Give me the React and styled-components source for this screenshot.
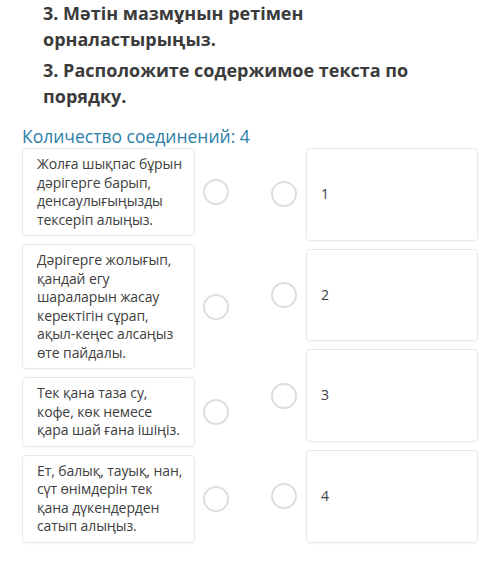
import React from "react";
import styled, { createGlobalStyle } from "styled-components";

const GlobalStyle = createGlobalStyle`
  body {
    margin: 0;
    background: #ffffff;
    font-family: "Open Sans", "Noto Sans", sans-serif;
    color: #3a3a3a;
  }
`;

const Page = styled.div`
  width: 500px;
  height: 587px;
  padding: 0 22px;
  box-sizing: border-box;
  overflow: hidden;
`;

const Question = styled.p`
  margin: 0 0 5px;
  padding-left: 21px;
  font-size: 18px;
  font-weight: 700;
  line-height: 26px;
  color: #3b3b3b;
`;

const Count = styled.div`
  margin-top: 15px;
  font-size: 17.5px;
  line-height: 24px;
  color: #2a7ea8;
`;

const Board = styled.div`
  display: flex;
  justify-content: space-between;
`;

const Column = styled.div`
  width: 207px;
  display: flex;
  flex-direction: column;
  gap: 8px;
`;

const Row = styled.div`
  display: flex;
  align-items: center;
  gap: ${(p) => p.$gap}px;
  flex: ${(p) => (p.$fill ? 1 : "none")};
`;

const Card = styled.div`
  box-sizing: border-box;
  width: 173px;
  align-self: stretch;
  display: flex;
  flex-direction: column;
  justify-content: center;
  padding: 6px 6px 6px 14px;
  border: 1px solid #e9e9e9;
  border-radius: 4px;
  box-shadow: 0 1px 2px rgba(0, 0, 0, 0.04);
  font-size: 14px;
  letter-spacing: -0.1px;
  line-height: 18.5px;
  color: #404040;
  white-space: nowrap;
`;

const Radio = styled.span`
  flex: none;
  width: 26px;
  height: 26px;
  box-sizing: border-box;
  border: 2.5px solid #dedede;
  border-radius: 50%;
`;

const left = [
  ["Жолға шықпас бұрын", "дәрігерге барып,", "денсаулығыңызды", "тексеріп алыңыз."],
  [
    "Дәрігерге жолығып,",
    "қандай егу",
    "шараларын жасау",
    "керектігін сұрап,",
    "ақыл-кеңес алсаңыз",
    "өте пайдалы.",
  ],
  ["Тек қана таза су,", "кофе, көк немесе", "қара шай ғана ішіңіз."],
  ["Ет, балық, тауық, нан,", "сүт өнімдерін тек", "қана дүкендерден", "сатып алыңыз."],
];

const right = ["1", "2", "3", "4"];

export default function App() {
  return (
    <>
      <GlobalStyle />
      <Page>
        <Question>3. Мәтін мазмұнын ретімен орналастырыңыз.</Question>
        <Question>3. Расположите содержимое текста по порядку.</Question>
        <Count>Количество соединений: 4</Count>
        <Board>
          <Column>
            {left.map((lines) => (
              <Row key={lines[0]} $gap={8}>
                <Card>
                  {lines.map((l) => (
                    <span key={l}>{l}</span>
                  ))}
                </Card>
                <Radio />
              </Row>
            ))}
          </Column>
          <Column>
            {right.map((t) => (
              <Row key={t} $gap={9} $fill>
                <Radio />
                <Card>{t}</Card>
              </Row>
            ))}
          </Column>
        </Board>
      </Page>
    </>
  );
}
